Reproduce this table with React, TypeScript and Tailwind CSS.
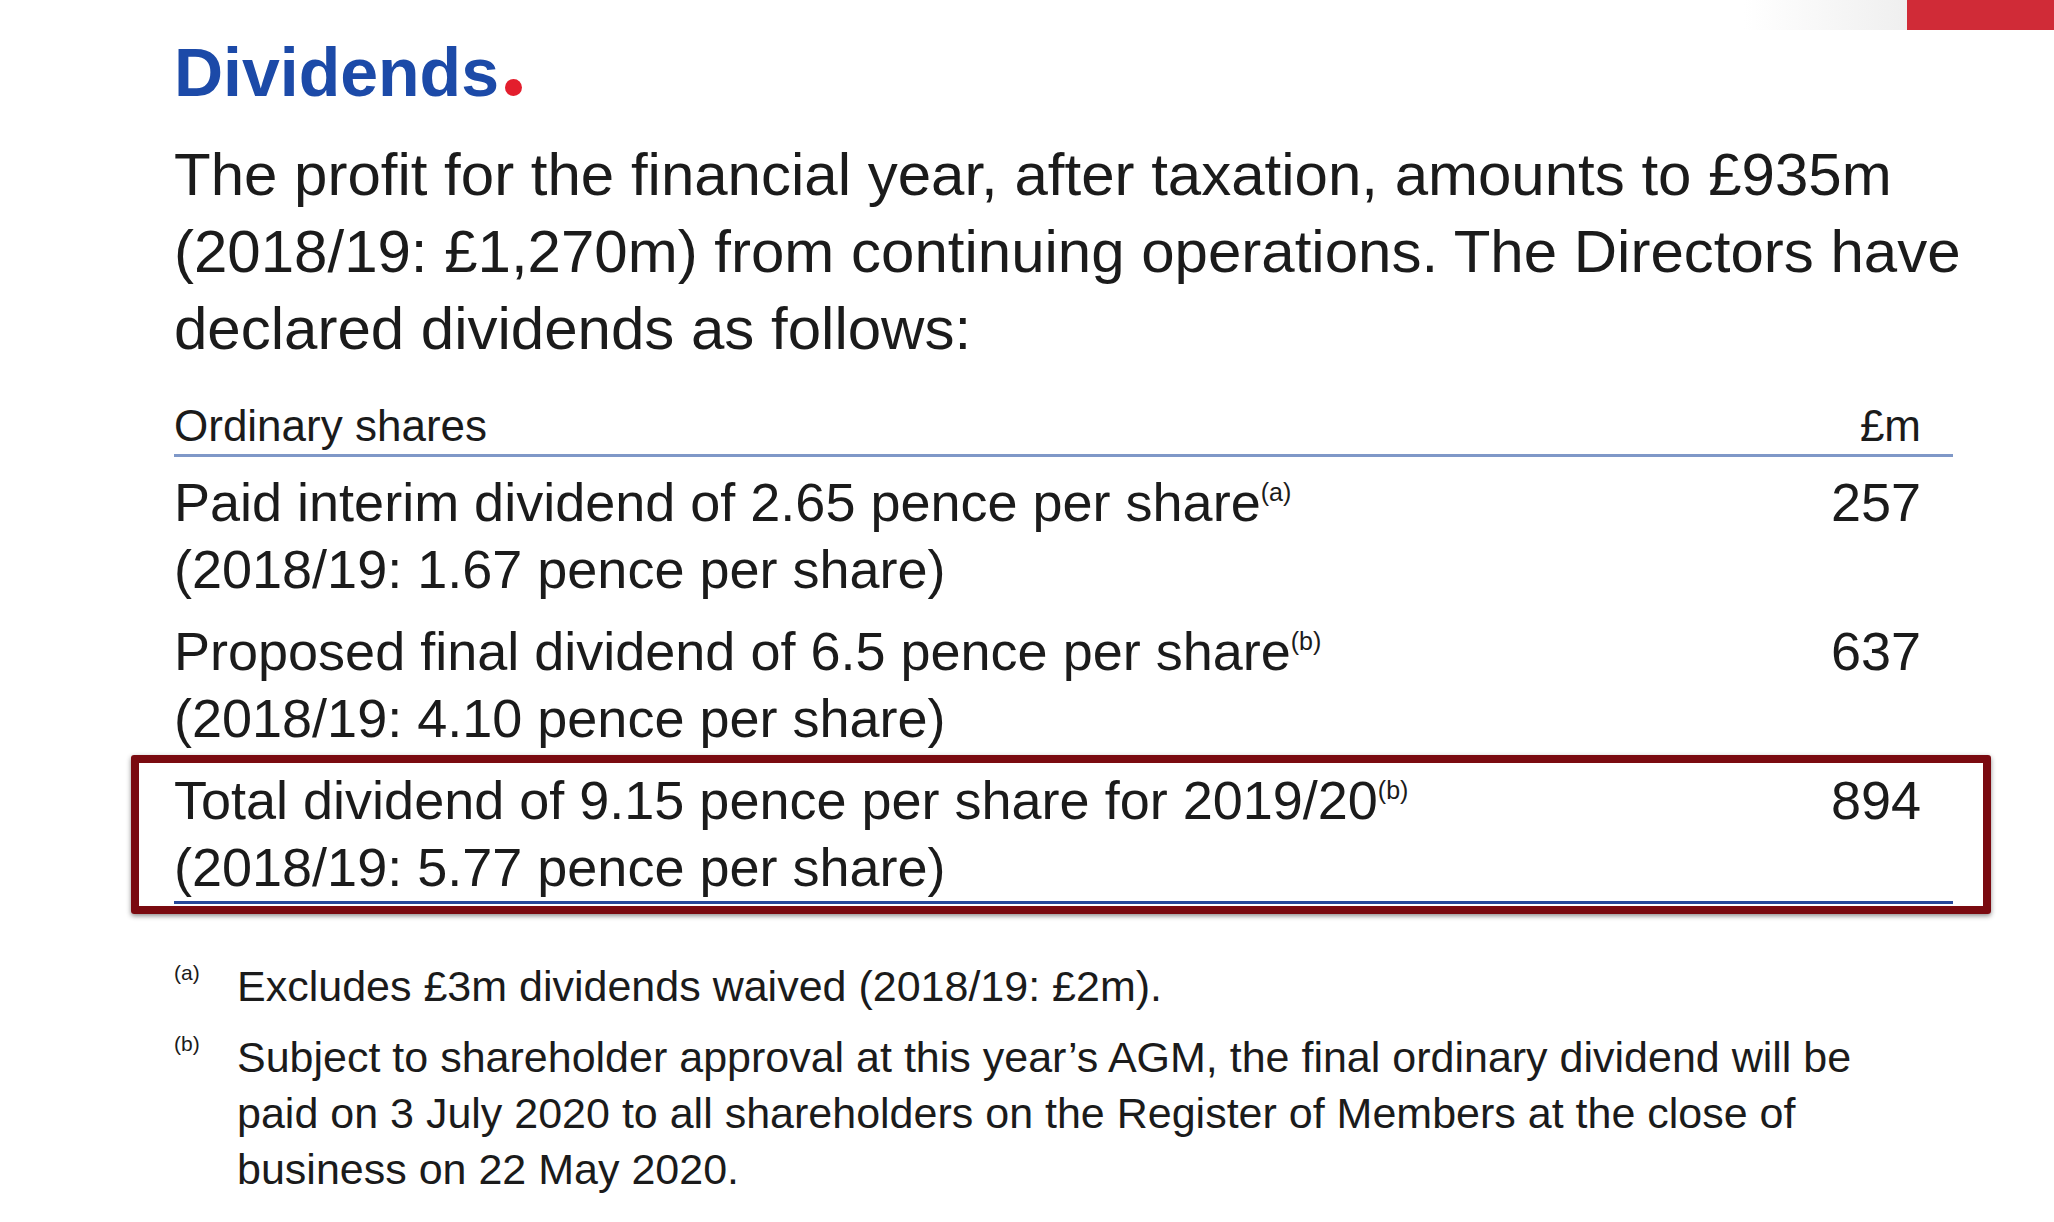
export default function App() {
  return (
    <div className="relative w-[2054px] h-[1222px] bg-white overflow-hidden text-[#1b1b1b] font-['Liberation_Sans',Arial,sans-serif]">
      <div className="flex justify-end h-[30px]">
        <div className="w-[163px] bg-linear-to-r from-white to-[#efefef]" />
        <div className="w-[147px] bg-[#d02b37]" />
      </div>
      <div className="pl-[174px]">
        <h1 className="mt-[5px] text-[68px] leading-[74px] font-bold text-[#1c4aa8] flex items-end">
          <span>Dividends</span>
          <span className="ml-[6px] mb-[13px] inline-block w-[17px] h-[17px] rounded-full bg-[#e31e2d]" />
        </h1>
        <p className="mt-[27px] text-[60px] leading-[77px] whitespace-nowrap">
          The profit for the financial year, after taxation, amounts to £935m
          <br />
          (2018/19: £1,270m) from continuing operations. The Directors have
          <br />
          declared dividends as follows:
        </p>
        <div className="mt-[31px] w-[1779px]">
          <div className="flex justify-between pr-[32px] text-[44px] leading-[56px] border-b-[3px] border-[#7f98c8]">
            <span>Ordinary shares</span>
            <span>£m</span>
          </div>
          <div className="flex justify-between pr-[32px] pt-[12px] text-[54px] leading-[67px] whitespace-nowrap">
            <div>
              Paid interim dividend of 2.65 pence per share
              <span className="text-[25px] leading-none align-[20px]">(a)</span>
              <br />
              (2018/19: 1.67 pence per share)
            </div>
            <div>257</div>
          </div>
          <div className="flex justify-between pr-[32px] pt-[15px] text-[54px] leading-[67px] whitespace-nowrap">
            <div>
              Proposed final dividend of 6.5 pence per share
              <span className="text-[25px] leading-none align-[20px]">(b)</span>
              <br />
              (2018/19: 4.10 pence per share)
            </div>
            <div>637</div>
          </div>
          <div className="relative flex justify-between pr-[32px] pt-[15px] text-[54px] leading-[67px] whitespace-nowrap border-b-[3px] border-[#27479a]">
            <div>
              Total dividend of 9.15 pence per share for 2019/20
              <span className="text-[25px] leading-none align-[20px]">(b)</span>
              <br />
              (2018/19: 5.77 pence per share)
            </div>
            <div>894</div>
            <div className="absolute left-[-43px] right-[-38px] top-[3px] bottom-[-13px] border-[8px] border-[#7a0a10] rounded-[3px] shadow-[0_2px_5px_rgba(0,0,0,0.45)]" />
          </div>
        </div>
        <div className="mt-[54px] flex text-[43px] leading-[56px] whitespace-nowrap">
          <span className="w-[63px] text-[21px] leading-none pt-[4px]">(a)</span>
          <span>Excludes £3m dividends waived (2018/19: £2m).</span>
        </div>
        <div className="mt-[15px] flex text-[43px] leading-[56px] whitespace-nowrap">
          <span className="w-[63px] text-[21px] leading-none pt-[4px]">(b)</span>
          <span>
            Subject to shareholder approval at this year’s AGM, the final ordinary dividend will be
            <br />
            paid on 3 July 2020 to all shareholders on the Register of Members at the close of
            <br />
            business on 22 May 2020.
          </span>
        </div>
      </div>
    </div>
  );
}
